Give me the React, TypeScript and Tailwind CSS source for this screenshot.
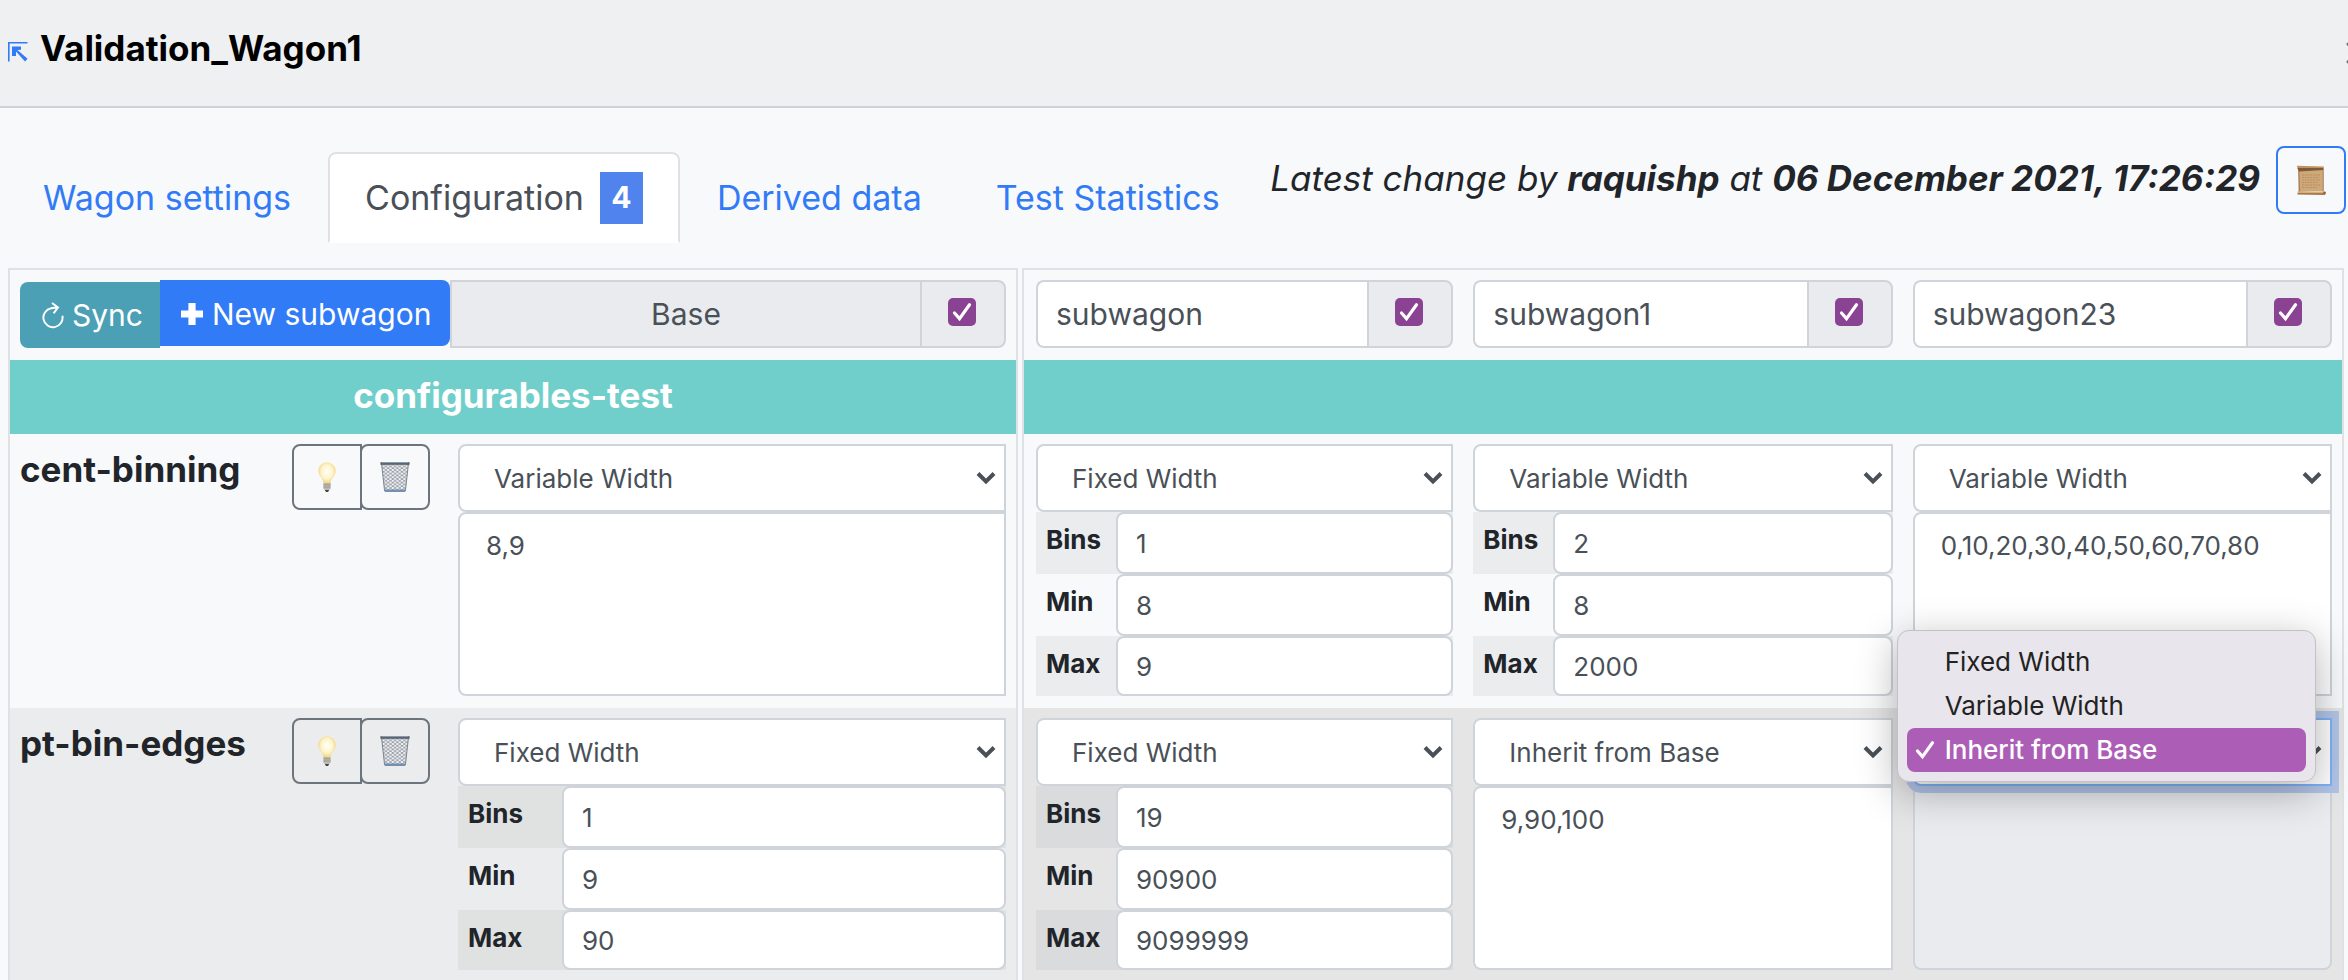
import { useId } from "react";

const WIDTH_MODES = ["Fixed Width", "Variable Width", "Inherit from Base"];

type Cell = {
  mode: string;
  bins?: [string, string, string];
  values?: string;
  disabled?: boolean;
  open?: boolean;
};

type ConfigRow = { name: string; base: Cell; subwagons: Cell[] };

const SUBWAGONS = ["subwagon", "subwagon1", "subwagon23"];

const ROWS: ConfigRow[] = [
  {
    name: "cent-binning",
    base: { mode: "Variable Width", values: "8,9" },
    subwagons: [
      { mode: "Fixed Width", bins: ["1", "8", "9"] },
      { mode: "Variable Width", bins: ["2", "8", "2000"] },
      { mode: "Variable Width", values: "0,10,20,30,40,50,60,70,80" },
    ],
  },
  {
    name: "pt-bin-edges",
    base: { mode: "Fixed Width", bins: ["1", "9", "90"] },
    subwagons: [
      { mode: "Fixed Width", bins: ["19", "90900", "9099999"] },
      { mode: "Inherit from Base", values: "9,90,100" },
      { mode: "Inherit from Base", values: "", disabled: true, open: true },
    ],
  },
];

function ExpandIcon() {
  return (
    <svg viewBox="0 0 20 20" className="size-5 shrink-0" aria-hidden="true">
      <path d="M0.8 19.5V0.8H19.5" fill="none" stroke="#317bf6" strokeWidth="1.6" />
      <path d="M4 4.4h9v3.4L9.4 8l10.2 8.8-2.6 2.8L8 9.6V14H4z" fill="#317bf6" />
    </svg>
  );
}

function SyncIcon() {
  return (
    <svg viewBox="0 0 22 27" className="h-[27px] w-[22px] shrink-0" aria-hidden="true">
      <path
        d="M20.4 13.8A9.6 9.6 0 1 1 9.2 6.2L15.6 5.2M10 1l6 4.4-4.4 6"
        fill="none"
        stroke="white"
        strokeWidth="1.9"
      />
    </svg>
  );
}

function PlusIcon() {
  return (
    <svg viewBox="0 0 24 24" className="size-6 shrink-0" aria-hidden="true">
      <path d="M8.4 1h7.2v7.4H23v7.2h-7.4V23H8.4v-7.4H1V8.4h7.4z" fill="white" />
    </svg>
  );
}

function ScrollIcon() {
  return (
    <svg viewBox="0 0 32 32" className="size-8" aria-hidden="true">
      <path d="M3.4 5h25v22.5h-24z" fill="#cfa879" />
      <path d="M3.2 5.5h1.2l.8 22H3.6zM27.8 5.5h.9v22h-1z" fill="#a98157" />
      <path
        d="M7 11h18M7 13.5h17M7 16h18M7 18.5h16M7 21h18M7 23.5h15"
        stroke="#b58d61"
        strokeWidth="0.9"
        strokeDasharray="2 0.7"
      />
      <path d="M1.8 1.8 28.8 2.4v2.4L2.6 4.6z" fill="#c2935f" />
      <path d="M2.4 4h26v2L4 7.6z" fill="#7c5a3a" />
      <path d="M3 27.6 29.6 28.4a1.4 1.4 0 0 1 0 2.6L2.4 30.6z" fill="#a27546" />
      <path d="M3 27.6 30 28v1.2L3 29z" fill="#d9ae7b" />
      <circle cx="29.6" cy="28.8" r="1.3" fill="#8b6238" />
    </svg>
  );
}

function BulbIcon() {
  return (
    <svg viewBox="0 0 32 32" className="size-8" aria-hidden="true">
      <defs>
        <radialGradient id="bulb-glow" cx="0.5" cy="0.45" r="0.55">
          <stop offset="0" stopColor="#fffef6" />
          <stop offset="0.6" stopColor="#fdf4cd" />
          <stop offset="1" stopColor="#f3d36f" />
        </radialGradient>
      </defs>
      <path
        d="M16 1.2a8.6 8.6 0 0 0-8.6 8.7c0 5.6 4.8 7.1 5.2 12.6h6.8c.4-5.5 5.200-7 5.200-12.6A8.600 8.600 0 0 0 16 1.2z"
        fill="url(#bulb-glow)"
      />
      <path d="M12.4 22h7.2v5.4l-1.4 1.6h-4.4l-1.4-1.6z" fill="#bdb9b2" />
      <path d="M12.4 23.8h7.2M12.4 26h7.2" stroke="#8f8b85" strokeWidth="0.7" />
      <path d="M13.8 29h4.4L17 31h-2z" fill="#45423f" />
    </svg>
  );
}

function TrashIcon() {
  return (
    <svg viewBox="0 0 32 32" className="size-8" aria-hidden="true">
      <defs>
        <pattern id="trash-mesh" width="4.6" height="3.6" patternUnits="userSpaceOnUse">
          <path d="M0 0 4.6 3.6M4.6 0 0 3.6" stroke="#747b84" strokeWidth="0.7" />
        </pattern>
      </defs>
      <path d="M2.6 3h26.8l-3 27H5.6z" fill="#f1f3f6" />
      <path d="M2.6 3h26.8l-3 27H5.6z" fill="url(#trash-mesh)" />
      <path d="M2.6 3 5.6 30M29.4 3 26.4 30" stroke="#7c848e" strokeWidth="1" />
      <path d="M1.4 1.2h29.2v2.6H1.4z" fill="#59616b" />
      <path d="M3 1.6h26" stroke="#8ea4bc" strokeWidth="0.8" />
      <path d="M5.4 28.4h21.2l-.4 2.6H5.8z" fill="#7490b0" />
    </svg>
  );
}

function Check({ className }: { className: string }) {
  return (
    <svg viewBox="0 0 20 20" className={className} aria-hidden="true">
      <path d="M2.5 11 7.5 16.6 17.5 2.8" fill="none" stroke="white" strokeWidth="3.2" strokeLinecap="round" />
    </svg>
  );
}

function EnabledBox({ label }: { label: string }) {
  return (
    <span className="flex w-[86px] shrink-0 items-center justify-center rounded-r-lg border-2 border-[#ced4da] bg-[#e9ebef]">
      <span className="relative mr-0.5 mb-1 flex">
        <input
          type="checkbox"
          defaultChecked
          aria-label={label}
          className="size-7 appearance-none rounded-[5px] bg-[#8a4293]"
        />
        <Check className="pointer-events-none absolute inset-1 size-5" />
      </span>
    </span>
  );
}

function OptionMenu({ selected }: { selected: string }) {
  return (
    <ul
      role="listbox"
      aria-label="Width mode"
      className="absolute bottom-1 -left-4 z-10 w-full rounded-xl border border-[#c3c1c6] bg-[#e8e5ec] p-[9px] text-[26px] leading-[44px] text-[#222] shadow-[0_10px_40px_rgba(0,0,0,0.3)]"
    >
      {WIDTH_MODES.map((mode) => (
        <li
          key={mode}
          role="option"
          aria-selected={mode === selected}
          className={
            mode === selected
              ? "flex items-center rounded-lg bg-[#ac5eb6] pl-2 font-medium text-white"
              : "flex items-center pl-2"
          }
        >
          <span className="flex w-[30px] shrink-0">{mode === selected && <Check className="size-5" />}</span>
          {mode}
        </li>
      ))}
    </ul>
  );
}

function ModeSelect({ cell, label }: { cell: Cell; label: string }) {
  return (
    <div className={cell.open ? "relative z-10" : "relative"}>
      <select
        aria-label={label}
        defaultValue={cell.mode}
        className={
          cell.open
            ? "block h-[68px] w-full appearance-none rounded-l-lg border-2 border-[#80b2f8] bg-white pr-12 pl-[34px] text-[26px] text-[#495057] shadow-[0_0_0_7px_#b2c5e8] outline-none"
            : "block h-[68px] w-full appearance-none rounded-l-lg border-2 border-[#ced4da] bg-white pr-12 pl-[34px] text-[26px] text-[#495057] outline-none"
        }
      >
        {WIDTH_MODES.map((mode) => (
          <option key={mode}>{mode}</option>
        ))}
      </select>
      <svg
        viewBox="0 0 20 14"
        className="pointer-events-none absolute top-[27px] right-[10px] h-[14px] w-5"
        aria-hidden="true"
      >
        <path d="M2 2.5 10 10.5 18 2.5" fill="none" stroke="#495057" strokeWidth="4" />
      </svg>
      {cell.open && <OptionMenu selected={cell.mode} />}
    </div>
  );
}

function BinFields({ values, wide, stripe }: { values: [string, string, string]; wide: boolean; stripe: string }) {
  const id = useId();
  return (
    <div className="grid grid-rows-[62px_62px_60px]">
      {["Bins", "Min", "Max"].map((name, i) => (
        <div key={name} className={i % 2 === 0 ? `flex ${stripe}` : "flex"}>
          <label
            htmlFor={id + name}
            className={
              wide
                ? "w-[104px] shrink-0 pt-2 pl-2.5 text-[26px] leading-10 font-bold"
                : "w-20 shrink-0 pt-2 pl-2.5 text-[26px] leading-10 font-bold"
            }
          >
            {name}
          </label>
          <input
            id={id + name}
            defaultValue={values[i]}
            className="h-full w-full min-w-0 rounded-lg border-2 border-[#ced4da] bg-white px-[18px] text-[26px] text-[#495057]"
          />
        </div>
      ))}
    </div>
  );
}

function ConfigCell({ cell, label, stripe, wide = false }: { cell: Cell; label: string; stripe: string; wide?: boolean }) {
  return (
    <>
      <ModeSelect cell={cell} label={`${label} mode`} />
      {cell.bins ? (
        <BinFields values={cell.bins} wide={wide} stripe={stripe} />
      ) : (
        <textarea
          aria-label={`${label} values`}
          defaultValue={cell.values}
          disabled={cell.disabled}
          className={
            cell.disabled
              ? "block h-[184px] w-full resize-none rounded-lg border-2 border-[#ced4da] bg-[#e9ebef] px-[26px] py-3 text-[26px] leading-10 text-[#495057]"
              : "block h-[184px] w-full resize-none rounded-l-lg border-2 border-[#ced4da] bg-white px-[26px] py-3 text-[26px] leading-10 text-[#495057]"
          }
        />
      )}
    </>
  );
}

function Tabs() {
  const tab = "flex h-[91px] items-center border-2 border-transparent px-[35px] text-[#317bf6]";
  return (
    <nav className="flex pt-11 pl-1.5 text-[34px] whitespace-nowrap">
      <a href="#settings" className={tab}>
        Wagon settings
      </a>
      <a
        href="#configuration"
        aria-current="page"
        className="flex h-[91px] items-center gap-4 rounded-t-lg border-2 border-[#dee2e6] border-b-white bg-white px-[35px] text-[#495057]"
      >
        Configuration
        <span className="flex h-[52px] w-[43px] items-center justify-center bg-[#5083ee] text-[30px] font-bold text-white">
          4
        </span>
      </a>
      <a href="#derived" className={tab}>
        Derived data
      </a>
      <a href="#statistics" className={tab}>
        Test Statistics
      </a>
    </nav>
  );
}

export default function App() {
  return (
    <div className="h-screen overflow-hidden bg-[#f8f9fb] font-['Inter','Liberation_Sans',sans-serif] text-[#212529]">
      <header className="flex h-[108px] items-start justify-between border-b-2 border-[#cfd1d4] bg-[#eff0f2] pt-6 pl-2">
        <div className="flex items-center gap-3">
          <a href="#expand" aria-label="Open wagon" className="mt-2">
            <ExpandIcon />
          </a>
          <h1 className="text-[35px] leading-[48px] font-bold text-black">Validation_Wagon1</h1>
        </div>
        <button type="button" aria-label="Close" className="-mr-[18px] pt-[18px]">
          <svg viewBox="0 0 20 22" className="h-[22px] w-5" aria-hidden="true">
            <path d="M2 2 18 20M18 2 2 20" stroke="#6d6f72" strokeWidth="3" strokeLinecap="round" />
          </svg>
        </button>
      </header>

      <div className="flex items-start justify-between">
        <Tabs />
        <div className="flex items-start gap-4 pt-[38px] pr-0.5 whitespace-nowrap">
          <p className="pt-1.5 text-[35px] leading-[52px] italic">
            Latest change by <b>raquishp</b> at <b>06 December 2021, 17:26:29</b>
          </p>
          <button
            type="button"
            aria-label="Change log"
            className="flex h-[68px] w-[70px] items-center justify-center rounded-lg border-2 border-[#317bf6]"
          >
            <ScrollIcon />
          </button>
        </div>
      </div>

      <main className="mt-[25px] grid grid-cols-[1010fr_1322fr] gap-1 pr-1 pl-2">
        <section className="border-2 border-b-0 border-[#dee2e6]">
          <table className="w-full table-fixed">
            <colgroup>
              <col className="w-[438px]" />
              <col />
            </colgroup>
            <thead>
              <tr>
                <th colSpan={2} className="h-[90px] px-2.5 pt-2.5 align-top font-normal">
                  <div className="flex h-[68px] text-[30px]">
                    <button
                      type="button"
                      className="mt-0.5 flex h-[66px] w-[140px] shrink-0 items-center gap-2 rounded-l-lg bg-[#4ca0b5] pl-[22px] text-white"
                    >
                      <SyncIcon />
                      Sync
                    </button>
                    <button
                      type="button"
                      className="flex h-[66px] w-[290px] shrink-0 items-center gap-2 rounded-r-lg bg-[#317bf6] pt-0.5 pl-5 whitespace-nowrap text-white"
                    >
                      <PlusIcon />
                      New subwagon
                    </button>
                    <input
                      readOnly
                      aria-label="Base wagon"
                      value="Base"
                      className="min-w-0 flex-1 border-2 border-r-0 border-[#ced4da] bg-[#e9ebef] text-center text-[#495057]"
                    />
                    <EnabledBox label="Enable Base" />
                  </div>
                </th>
              </tr>
              <tr>
                <th colSpan={2} className="h-[74px] bg-[#70cfcb] pb-1 text-center text-[35px] leading-[52px] font-bold text-white">
                  configurables-test
                </th>
              </tr>
            </thead>
            <tbody>
              {ROWS.map((row, i) => (
                <tr key={row.name} className={i % 2 ? "bg-[#ebeced]" : ""}>
                  <th className="h-[274px] pt-2.5 pr-[18px] pl-2.5 align-top">
                    <div className="flex items-start justify-between whitespace-nowrap">
                      <span className="text-[35px] leading-[50px] font-bold">{row.name}</span>
                      <span className="flex">
                        <button
                          type="button"
                          aria-label={`Describe ${row.name}`}
                          className="flex h-[66px] w-[70px] items-center justify-center rounded-l-lg border-2 border-[#6c757d]"
                        >
                          <BulbIcon />
                        </button>
                        <button
                          type="button"
                          aria-label={`Delete ${row.name}`}
                          className="-ml-0.5 flex h-[66px] w-[70px] items-center justify-center rounded-lg border-2 border-[#6c757d]"
                        >
                          <TrashIcon />
                        </button>
                      </span>
                    </div>
                  </th>
                  <td className="px-2.5 pt-2.5 pb-3 align-top">
                    <ConfigCell
                      cell={row.base}
                      label={`${row.name} Base`}
                      stripe={i % 2 ? "bg-[#e0e2e1]" : "bg-[#ebecee]"}
                      wide
                    />
                  </td>
                </tr>
              ))}
            </tbody>
          </table>
        </section>

        <section className="border-2 border-b-0 border-[#dee2e6]">
          <table className="w-full table-fixed">
            <thead>
              <tr>
                {SUBWAGONS.map((name) => (
                  <th key={name} className="h-[90px] px-2.5 pt-2.5 align-top font-normal first:pl-3">
                    <div className="flex h-[68px] text-[30px]">
                      <input
                        aria-label="Subwagon name"
                        defaultValue={name}
                        className="min-w-0 flex-1 rounded-l-lg border-2 border-r-0 border-[#ced4da] bg-white px-[18px] text-[#495057]"
                      />
                      <EnabledBox label={`Enable ${name}`} />
                    </div>
                  </th>
                ))}
              </tr>
              <tr>
                <td colSpan={3} className="h-[74px] bg-[#70cfcb]" />
              </tr>
            </thead>
            <tbody>
              {ROWS.map((row, i) => (
                <tr key={row.name} className={i % 2 ? "bg-[#e5e5e5]" : ""}>
                  {row.subwagons.map((cell, j) => (
                    <td key={SUBWAGONS[j]} className="h-[274px] px-2.5 pt-2.5 pb-3 align-top first:pl-3">
                      <ConfigCell
                        cell={cell}
                        label={`${row.name} ${SUBWAGONS[j]}`}
                        stripe={i % 2 ? "bg-[#dadbdc]" : "bg-[#ebecee]"}
                      />
                    </td>
                  ))}
                </tr>
              ))}
            </tbody>
          </table>
        </section>
      </main>
    </div>
  );
}
